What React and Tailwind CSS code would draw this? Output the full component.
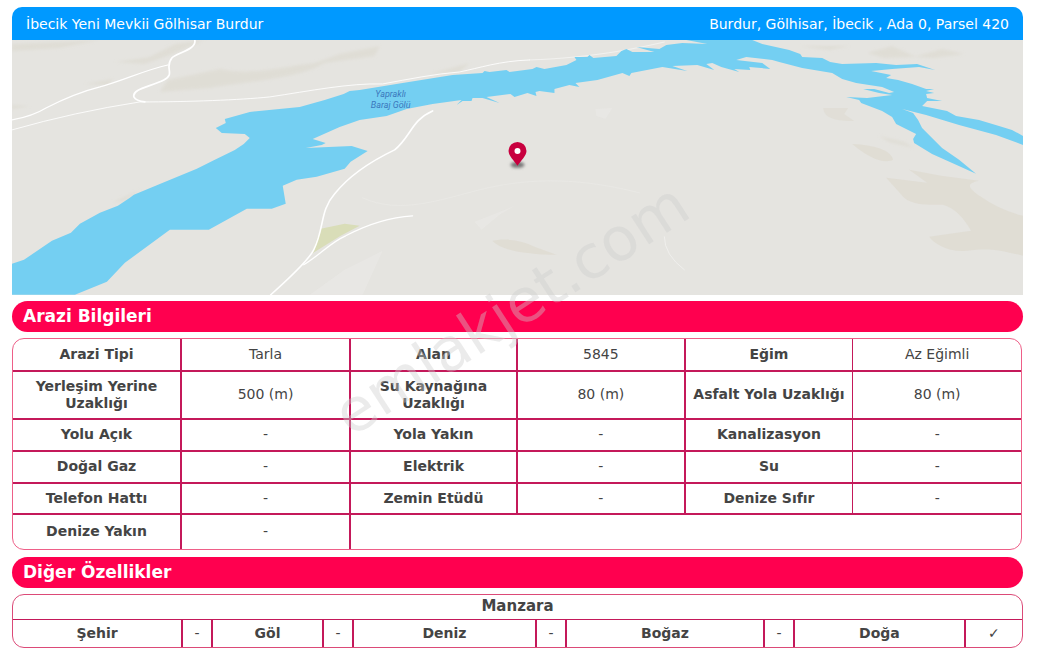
const landRows = [
    [['Arazi Tipi', 'Tarla'], ['Alan', '5845'], ['Eğim', 'Az Eğimli']],
    [['Yerleşim Yerine Uzaklığı', '500 (m)'], ['Su Kaynağına Uzaklığı', '80 (m)'], ['Asfalt Yola Uzaklığı', '80 (m)']],
    [['Yolu Açık', '-'], ['Yola Yakın', '-'], ['Kanalizasyon', '-']],
    [['Doğal Gaz', '-'], ['Elektrik', '-'], ['Su', '-']],
    [['Telefon Hattı', '-'], ['Zemin Etüdü', '-'], ['Denize Sıfır', '-']],
    [['Denize Yakın', '-']]
];

const landRowHeights = ['h-[33px]', 'h-12', 'h-8', 'h-8', 'h-[31px]', 'h-[34px]'];

const views = [
    { name: 'Şehir', value: '-', width: 'w-[170px]' },
    { name: 'Göl', value: '-', width: 'w-[111px]' },
    { name: 'Deniz', value: '-', width: 'w-[183px]' },
    { name: 'Boğaz', value: '-', width: '' },
    { name: 'Doğa', value: '✓', width: 'w-[171px]' }
];

function LocationMap() {
    return (
        <svg
            viewBox="12 40 1012 255"
            preserveAspectRatio="xMidYMid slice"
            className="block w-full bg-[#e5e4e0]"
            role="img"
            aria-label="Yapraklı Baraj Gölü"
        >
            <defs>
                <filter id="soft" x="-20%" y="-50%" width="140%" height="200%">
                    <feGaussianBlur stdDeviation="1.5" />
                </filter>
            </defs>

            {/* hills */}
            <g fill="#dedbd1">
                <path d="M887 178 L928 183 L910 170 L942 176 L980 181 C966 184 969 188 982 197 Q1000 210 1024 216 V256 C1000 250 990 248 968 251 C950 253 935 244 930 237 L972 231 C965 219 957 209 944 205 C930 205 915 206 905 198 Z" opacity=".8" />
                <path d="M853 144 C875 145 892 150 894 160 C884 165 867 156 853 144 Z" opacity=".8" />
                <path d="M824 108 L849 108 L845 114 L855 121 C838 121 825 119 824 108 Z" opacity=".6" />
                <path d="M493 241 C510 238 523 241 535 247 L557 255 C535 255 502 252 493 241 Z" opacity=".8" />
            </g>
            <g fill="#dcd9cf" opacity=".6" filter="url(#soft)">
                <path d="M168 80 L220 69 C255 76 285 66 315 63 L340 54 L380 46 L375 56 L325 63 C300 78 260 80 210 88 L160 92 Z" />
                <path d="M115 62 L150 57 L175 44 L205 40 L170 55 L145 64 Z" />
                <path d="M12 44 L100 40 L60 48 L12 51 Z" />
                <path d="M85 84 L113 79 L108 85 Z" />
                <path d="M868 53 L893 46 L917 57 L885 58 Z" />
                <path d="M915 57 L943 49 L965 54 L935 58 Z" />
                <path d="M800 46 L850 46 L830 50 Z" />
                <path d="M12 105 L30 106 L12 109 Z" />
                <path d="M430 74 L470 63 L460 72 Z" />
                <path d="M112 203 L140 190 L125 201 Z" />
                <path d="M880 136 L905 142 L915 148 L890 142 Z" />
            </g>
            <path d="M383 251 L363 295 H310 L345 270 Z M475 222 L515 206 L500 215 L482 230 Z M596 109 L613 108 L606 119 L597 116 Z" fill="#e9e8e6" opacity=".7" />
            <path d="M321 229 L345 224 L360 226 L341 236 L312 254 Z" fill="#d9ddb8" />

            {/* roads */}
            <g fill="none" stroke="#fff" strokeLinecap="round" strokeLinejoin="round">
                <path d="M12 120 C28 117 38 113 46 108 C60 101 80 92 100 87 C125 80 145 70 168 65" strokeWidth="1.2" />
                <path d="M12 130 Q75 112 140 102 C190 102 240 100 270 97 C310 91 350 83 383 84 C410 79 435 74 460 72 C480 68 500 61 530 60" strokeWidth="1" opacity=".85" />
                <path d="M530 60 C590 58 635 49 665 42" strokeWidth="1" opacity=".5" />
                <path d="M195 40 C197 50 176 53 172 58 C164 68 176 74 164 80 C150 87 132 89 134 97 Q136 101 145 102" strokeWidth="1.7" />
                <path d="M433 111 C412 120 411 137 395 150 C370 162 350 175 335 194 C320 211 325 228 314 250 Q308 262 271 295" strokeWidth="1.6" />
                <path d="M304 265 C322 254 330 243 346 236 Q380 218 413 216" strokeWidth="1.3" />
                <path d="M665 237 Q665 255 685 270" strokeWidth="1" opacity=".4" />
                <path d="M363 198 C400 215 440 200 480 190 S570 175 640 193" strokeWidth="1" opacity=".15" />
            </g>

            <path
                fill="#74cff2"
                d="M12 264 L24 260 L52 241 L71 233 L80 224 L100 213 L118 206 L130 198 L134 195 L163 183 L197 169 L213 161 L235 150 L244 144 L250 138 L245 134 L222 133 L216 128 L226 123 L225 119 L250 112 L300 107 L325 100 L344 94 L350 91 L360 90 L403 83 L453 75 L483 73 L485 71 L490 72 L507 70 L510 72 L533 69 L537 67 L545 69 L567 65 L577 60 L575 57 L588 57 L590 55 L594 58 L617 56 L622 51 L627 49 L633 52 L655 52 L637 47 L660 49 L667 45 L683 43 L708 44 L687 40 L753 40 L763 44 L790 50 L801 54 L803 57 L823 58 L831 62 L843 64 L877 63 L897 65 L918 64 L936 70 L920 67 L893 69 L872 71 L892 75 L887 78 L899 80 L913 84 L927 89 L935 89 L927 91 L935 93 L927 94 L928 98 L943 101 L928 101 L923 106 L948 111 L957 116 L980 120 L1000 126 L1013 130 L1024 136 V145 L997 135 L960 125 L927 115 L903 109 L914 113 L919 120 L923 128 L928 133 L943 148 L960 160 L977 174 L957 165 L933 154 L915 143 L914 139 L917 134 L897 124 L893 117 L883 111 L862 103 L860 100 L847 97 L868 98 L893 95 L880 93 L864 89 L875 89 L890 93 L895 92 L883 87 L857 83 L843 79 L833 73 L803 68 L780 62 L773 60 L747 57 L737 60 L763 63 L771 69 L750 67 L751 70 L735 69 L740 72 L722 67 L713 63 L707 64 L715 70 L698 65 L673 66 L688 71 L663 67 L632 73 L630 76 L623 73 L598 80 L576 83 L580 87 L570 85 L555 89 L555 93 L540 91 L536 92 L537 96 L528 93 L515 97 L511 94 L487 97 L500 103 L483 98 L473 98 L472 101 L463 101 L457 105 L462 100 L433 104 L407 109 L387 116 L360 120 L340 127 L313 139 L326 143 L322 145 L306 148 L352 146 L368 151 L351 162 L345 169 L317 177 L297 180 L283 186 L286 204 L272 209 L247 209 L209 230 L170 230 L125 263 L107 282 L75 295 L12 295 Z"
            />

            <g fill="#3b78bd" fontFamily="Roboto, sans-serif" fontSize="9" fontStyle="italic" textAnchor="middle">
                <text x="391" y="97">Yapraklı</text>
                <text x="391" y="108">Baraj Gölü</text>
            </g>

            <ellipse cx="518" cy="165" rx="7" ry="3" fill="#777" filter="url(#soft)" />
            <path d="M518 166 C515 161 509 156 509 151 A9 9 0 0 1 527 151 C527 156 521 161 518 166 Z" fill="#c8003f" />
            <circle cx="518" cy="151" r="3" fill="#fff" />
        </svg>
    );
}

function SectionTitle({ children }) {
    return (
        <h2 className="h-[31px] rounded-full bg-[#ff004f] px-[11px] text-[17px] leading-[31px] font-bold text-white">
            {children}
        </h2>
    );
}

function LandTable() {
    return (
        <div className="mt-1.5 mr-px overflow-hidden rounded-xl border border-[#ee5f88]">
            <table className="w-full table-fixed border-separate border-spacing-0 text-center text-sm leading-[17px]">
                <colgroup>
                    <col className="w-[169px]" />
                    <col className="w-[169px]" />
                    <col className="w-[167px]" />
                    <col span={3} />
                </colgroup>
                <tbody>
                    {landRows.map((row, i) => {
                        const line = i < landRows.length - 1 ? 'border-b-2' : '';
                        return (
                            <tr key={i} className={landRowHeights[i]}>
                                {row.map(([label, value], j) => [
                                    <th
                                        key={label}
                                        scope="row"
                                        className={`border-[#c4195a] px-1 font-bold ${line} ${j < 2 ? 'border-r-2' : 'border-r'}`}
                                    >
                                        {label}
                                    </th>,
                                    <td key={label + 'v'} className={`border-[#c4195a] px-1 ${line} ${j < 2 ? 'border-r-2' : ''}`}>
                                        {value}
                                    </td>
                                ])}
                                {row.length < 3 && <td colSpan={4} />}
                            </tr>
                        );
                    })}
                </tbody>
            </table>
        </div>
    );
}

function ViewTable() {
    return (
        <div className="mt-1.5 overflow-hidden rounded-xl border border-[#dc4a78]">
            <table className="w-full table-fixed border-separate border-spacing-0 text-center text-sm leading-[17px]">
                <colgroup>
                    {views.map((view, i) => [
                        <col key={view.name} className={view.width} />,
                        <col key={view.name + 'v'} className={i < views.length - 1 ? 'w-[30px]' : 'w-14'} />
                    ])}
                </colgroup>
                <tbody>
                    <tr className="h-[25px]">
                        <th colSpan={10} className="border-b border-[#c4195a] text-[15px] font-bold">Manzara</th>
                    </tr>
                    <tr className="h-[27px]">
                        {views.map((view, i) => [
                            <th key={view.name} scope="row" className="border-r-2 border-[#c4195a] font-bold">
                                {view.name}
                            </th>,
                            <td key={view.name + 'v'} className={`border-[#c4195a] ${i < views.length - 1 ? 'border-r-2' : ''}`}>
                                {view.value}
                            </td>
                        ])}
                    </tr>
                </tbody>
            </table>
        </div>
    );
}

export default function App() {
    return (
        <main className="relative overflow-hidden bg-white pt-[7px] pr-[18px] pb-[3px] pl-3 font-['DejaVu_Sans',sans-serif] text-[#444]">
            <header className="flex h-[33px] items-center justify-between rounded-t-[10px] bg-[#0099ff] px-3.5 text-sm text-white">
                <h1>İbecik Yeni Mevkii Gölhisar Burdur</h1>
                <p>Burdur, Gölhisar, İbecik , Ada 0, Parsel 420</p>
            </header>
            <LocationMap />
            <section className="mt-1.5">
                <SectionTitle>Arazi Bilgileri</SectionTitle>
                <LandTable />
            </section>
            <section className="mt-[7px]">
                <SectionTitle>Diğer Özellikler</SectionTitle>
                <ViewTable />
            </section>

            <div className="pointer-events-none absolute top-0 right-5 bottom-8 left-0 flex items-center justify-center">
                <span className="-rotate-33 text-6xl text-[#cccccc]/40">emlakjet.com</span>
            </div>
        </main>
    );
}
